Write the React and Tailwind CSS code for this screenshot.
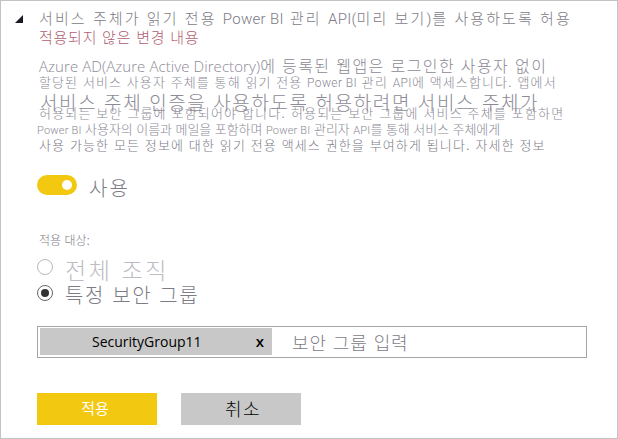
const KR = "font-['Liberation_Sans','Noto_Sans_CJK_KR',sans-serif]";

function Line({ className, children }) {
  return <div className={`flex items-center whitespace-pre font-light ${className}`}><span>{children}</span></div>;
}

function Latin({ className = "", children }) {
  return <span className={className}>{children}</span>;
}

function Description() {
  return (
    <div className="mt-[11px] text-[#8b8a95]">
      <Line className="h-4 text-[16px] tracking-[1.4px]">
        <Latin className="font-['Open_Sans'] text-[15px] tracking-[0.08px]">Azure AD(Azure Active Directory)</Latin>
        에 등록된 웹앱은 로그인한 사용자 없이
      </Line>
      <Line className="h-4 text-[13px] tracking-[1.1px]">
        할당된 서비스 사용자 주체를 통해 읽기 전용 <Latin className="font-['Roboto'] text-[12px] tracking-[0.4px]">Power BI</Latin> 관리{" "}
        <Latin className="font-['Roboto'] text-[12px] tracking-[0.4px]">API</Latin>에 액세스합니다. 앱에서
      </Line>
      <Line className="h-[22px] pl-px pt-[3px] text-[19px] leading-5 tracking-[1.6px]">
        서비스 주체 인증을 사용하도록 허용하려면 서비스 주체가
      </Line>
      <Line className="-mt-[7px] h-4 text-[13px] tracking-[1.17px]">
        허용되는 보안 그룹에 포함되어야 합니다. 허용되는 보안 그룹에 서비스 주체를 포함하면
      </Line>
      <Line className="-ml-0.5 h-4 text-[13px] tracking-[-0.06px]">
        <Latin className="font-['Roboto'] text-[11px] tracking-[0.2px]">Power BI</Latin> 사용자의 이름과 메일을 포함하며{" "}
        <Latin className="font-['Roboto'] text-[11px] tracking-[0.2px]">Power BI</Latin> 관리자{" "}
        <Latin className="font-['Roboto'] text-[11px] tracking-[0.2px]">API</Latin>를 통해 서비스 주체에게
      </Line>
      <Line className="h-4 text-[13px] tracking-[1.13px] text-[#7c7b86]">
        사용 가능한 모든 정보에 대한 읽기 전용 액세스 권한을 부여하게 됩니다. 자세한 정보
      </Line>
    </div>
  );
}

function Radio({ checked }) {
  return (
    <span
      className={`flex size-4 items-center justify-center rounded-full border ${checked ? "border-[#666666]" : "border-[#b8b8b8]"}`}
    >
      {checked && <span className="size-2 rounded-full bg-[#333333]" />}
    </span>
  );
}

export default function App() {
  return (
    <div className={`h-[439px] w-[618px] overflow-hidden border border-[#c3c3c3] bg-white pl-9 pt-2 text-[#7c7b86] ${KR}`}>
      <div className="flex">
        <svg className="-ml-[22px] mr-[14px] mt-1.5 h-2 w-2 shrink-0" viewBox="0 0 8 8">
          <path d="M8 0V8H0Z" fill="#1c1a26" />
        </svg>
        <div className="pl-[2px]">
          <Line className="h-5 text-[15px] tracking-[2.08px]">
            서비스 주체가 읽기 전용 <Latin className="font-['Roboto'] tracking-[0.3px]">Power BI</Latin> 관리{" "}
            <Latin className="font-['Roboto'] tracking-[0.3px]">API(</Latin>미리 보기<Latin className="tracking-[1px] font-['Roboto']">)</Latin>를 사용하도록 허용
          </Line>
          <Line className="h-[19px] text-[15px] tracking-[0.75px] text-[#b05e70]">적용되지 않은 변경 내용</Line>
          <Description />
        </div>
      </div>

      <div className="mt-[21px] flex h-5 items-center">
        <span className="flex h-5 w-10 items-center justify-end rounded-full bg-[#f2c811] pr-[5px]">
          <span className="size-[10px] rounded-full bg-white" />
        </span>
        <Line className="ml-3 mt-[7px] h-7 text-[20px] tracking-[2px]">사용</Line>
      </div>

      <Line className="mt-[37px] h-4 pl-[2px] pt-0.5 text-[12px]">적용 대상:</Line>

      <div className="mt-[10px] flex h-[18px] items-center">
        <Radio />
        <Line className="ml-3 mt-[9px] h-7 text-[23px] tracking-[2.6px] text-[#bdbcc4]">전체 조직</Line>
      </div>
      <div className="mt-2 flex h-[18px] items-center">
        <Radio checked />
        <Line className="ml-3 mt-1.5 h-6 text-[20px] tracking-[1.6px]">특정 보안 그룹</Line>
      </div>

      <div className="mt-6 flex h-8 w-[550px] items-center border border-[#a6a6a6] pl-0.5">
        <div className="-mt-px flex h-[27px] w-[232px] items-center bg-[#c8c8c8] pl-[52px] pr-2 font-['Open_Sans'] text-[14px] text-black">
          <span>SecurityGroup11</span>
          <span className="-mt-px ml-auto text-[15px] font-semibold">x</span>
        </div>
        <Line className="ml-5 mt-1 h-6 text-[18px] tracking-[0.9px]">보안 그룹 입력</Line>
      </div>

      <div className="mt-[35px] flex gap-6">
        <button className="flex h-8 w-[120px] items-center justify-center bg-[#f2c811] pr-1 text-[15px] text-white">
          적용
        </button>
        <button className="flex h-8 w-[120px] items-center justify-center bg-[#c8c8c8] pl-1 pt-0.5 text-[18px] font-light tracking-[1.5px] text-black">
          취소
        </button>
      </div>
    </div>
  );
}
